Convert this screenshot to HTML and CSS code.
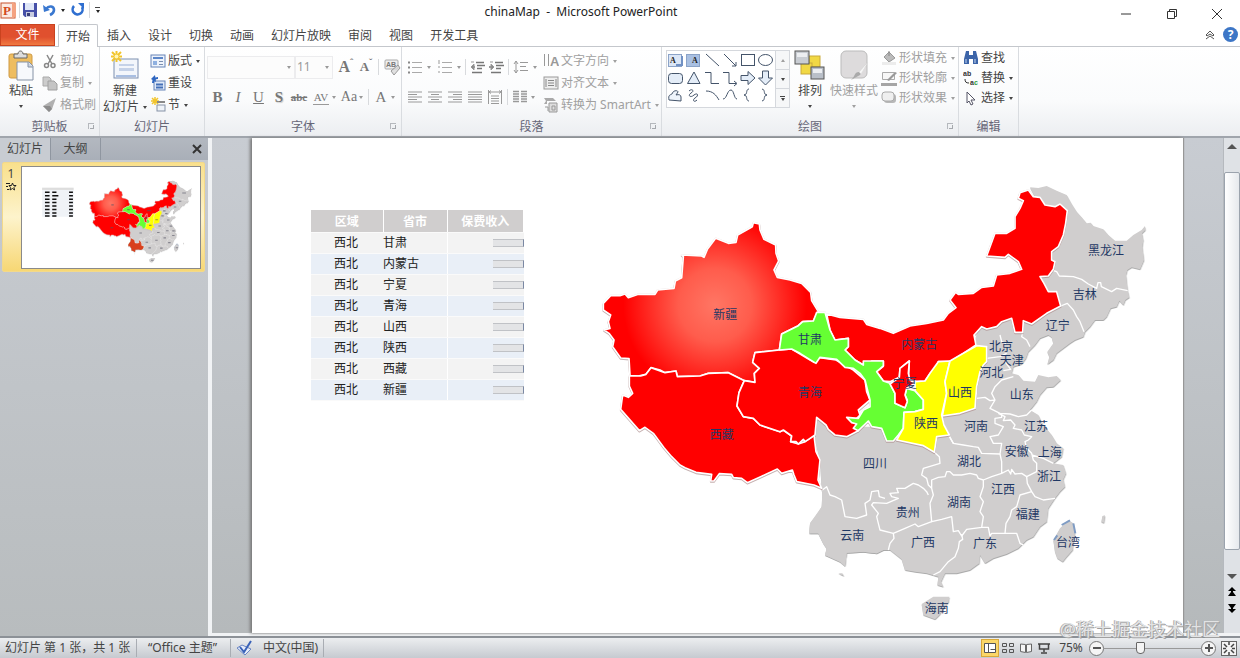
FILE: index.html
```html
<!DOCTYPE html>
<html lang="zh-CN">
<head>
<meta charset="utf-8">
<meta name="viewport" content="width=device-width, initial-scale=1">
<title>chinaMap - Microsoft PowerPoint</title>
<link rel="stylesheet" href="styles.css">
</head>
<body>
<div class="app">
  <header class="titlebar">
    <div class="quick">
      <svg width="17" height="18" viewBox="0 0 17 18"><rect x="1" y="2" width="14" height="15" fill="#fbeae2" stroke="#c8522c"/><path d="M12 1l4 2v13l-4 1z" fill="#f4a382"/><text x="3" y="14" class="logo-letter">P</text></svg>
      <i class="divider"></i>
      <button class="plain" aria-label="保存"><svg width="16" height="16" viewBox="0 0 16 16"><path d="M1 1h14v14H3l-2-2z" fill="#4650a8"/><path d="M3 1h9v7H3z" fill="#dfe6f7"/><path d="M4 10h8v5H4z" fill="#c9cde0"/><path d="M5 11h3v3H5z" fill="#3b4078"/></svg></button>
      <button class="plain undo" aria-label="撤消"><svg width="14" height="14" viewBox="0 0 14 14"><path d="M3 6C6 2 11 3 11 7c0 3-2 4-4 5" fill="none" stroke="#3a78d0" stroke-width="2.600"/><path d="M0 2l1 7 6-2z" fill="#3a78d0"/></svg><i class="caret"></i></button>
      <button class="plain redo" aria-label="重复"><svg width="14" height="14" viewBox="0 0 14 14"><path d="M3 3a5 5 0 1 0 8 1" fill="none" stroke="#2f6fd0" stroke-width="2.600"/><path d="M7 0h6v6z" fill="#2f6fd0"/></svg></button>
      <i class="divider"></i>
      <button class="plain more" aria-label="自定义快速访问工具栏"><i class="bar"></i><i class="caret"></i></button>
    </div>
    <h1 class="title">chinaMap&nbsp; -&nbsp; Microsoft PowerPoint</h1>
    <div class="window-buttons">
      <button class="plain" aria-label="最小化"><svg width="12" height="12" viewBox="0 0 12 12"><path d="M1 6h10" stroke="#333"/></svg></button>
      <button class="plain" aria-label="还原"><svg width="12" height="12" viewBox="0 0 12 12"><path d="M1.500 3.500h7v7h-7zM3.500 3.500v-2h7v7h-2" fill="none" stroke="#333"/></svg></button>
      <button class="plain" aria-label="关闭"><svg width="12" height="12" viewBox="0 0 12 12"><path d="M1 1l10 10M11 1L1 11" stroke="#333"/></svg></button>
    </div>
  </header>

  <nav class="tabs">
    <button class="file">文件</button>
    <button class="tab current">开始</button>
    <button class="tab">插入</button>
    <button class="tab">设计</button>
    <button class="tab">切换</button>
    <button class="tab">动画</button>
    <button class="tab">幻灯片放映</button>
    <button class="tab">审阅</button>
    <button class="tab">视图</button>
    <button class="tab">开发工具</button>
    <span class="spacer"></span>
    <button class="plain" aria-label="折叠功能区"><svg width="10" height="10" viewBox="0 0 10 10"><path d="M1 5l4-4 4 4-1 1-3-2-3 2zM1 9l4-3 4 3" fill="none" stroke="#555"/></svg></button>
    <button class="help" aria-label="帮助">?</button>
  </nav>

  <div class="ribbon">
    <section class="group clipboard">
      <div class="body">
        <button class="big">
          <svg width="28" height="31" viewBox="0 0 28 31"><rect x="2" y="4" width="23" height="24" rx="2" fill="#eebd60" stroke="#cf9a45"/><path d="M7 8V4h4c0-4 5-4 5 0h4v4z" fill="#ddd" stroke="#666"/><path d="M10 12h12l4 4v14H10z" fill="#f7f9fc" stroke="#8592a6"/><path d="M21 12v5h5" fill="#cdd5e0" stroke="#8592a6"/></svg>
          <span>粘贴</span><i class="caret"></i>
        </button>
        <div class="stack">
          <button class="small" disabled><svg width="16" height="16" viewBox="0 0 16 16"><path d="M5 2l5 9M11 2L6 11" stroke="#888" stroke-width="1.500"/><circle cx="4.500" cy="12.500" r="2" fill="none" stroke="#888" stroke-width="1.500"/><circle cx="11" cy="12.500" r="2" fill="none" stroke="#888" stroke-width="1.500"/></svg>剪切</button>
          <button class="small" disabled><svg width="16" height="16" viewBox="0 0 16 16"><path d="M1 2h6l2 2v7H1z" fill="#ccc" stroke="#aaa"/><path d="M6 6h6l3 3v6H6z" fill="#c4c4c4" stroke="#a0a0a0"/></svg>复制<i class="caret"></i></button>
          <button class="small" disabled><svg width="16" height="16" viewBox="0 0 16 16"><path d="M14 1l-4 11-3 3-6-6z" fill="#b0b0b0"/><path d="M1 9h7l2 3-3 3z" fill="#8c8c8c"/></svg>格式刷</button>
        </div>
      </div>
      <h2>剪贴板<i class="launcher"></i></h2>
    </section>

    <section class="group slides">
      <div class="body">
        <button class="big">
          <svg width="30" height="31" viewBox="0 0 30 31"><rect x="4" y="9" width="24" height="19" fill="#f3f6fb" stroke="#7d8fb0"/><path d="M6 25h20v2H6z" fill="#a9bfe2"/><path d="M9 14h15v2H9zM9 18h15v3H9z" fill="#c5d2e8"/><path d="M6.500 1v11M1 6.500h11M2 2l9 9M11 2l-9 9" stroke="#f2c52c" stroke-width="2"/><circle cx="6.500" cy="6.500" r="2" fill="#fff6b8"/></svg>
          <span>新建</span><span>幻灯片<i class="caret"></i></span>
        </button>
        <div class="stack">
          <button class="small"><svg width="16" height="14" viewBox="0 0 16 14"><rect x="1" y="1" width="14" height="12" fill="#eef3fb" stroke="#6684b8"/><path d="M3 3h10v2H3z" fill="#5c86c8"/><path d="M3 7h4v4H3z" fill="#8fb0e0"/><path d="M9 7.500h4M9 10.500h4" stroke="#7a8eb0"/></svg>版式<i class="caret"></i></button>
          <button class="small"><svg width="16" height="16" viewBox="0 0 16 16"><rect x="4" y="6" width="11" height="9" fill="#dfe9f8" stroke="#6684b8"/><path d="M6 9.500h7M6 12.500h7" stroke="#4470b8" stroke-width="2"/><path d="M3 8c0-4 2-5 5-5" fill="none" stroke="#2f66c0" stroke-width="2"/><path d="M5 0L1 4l5 3z" fill="#2f66c0"/></svg>重设</button>
          <button class="small"><svg width="16" height="16" viewBox="0 0 16 16"><path d="M5 0v8M1 4h8M2 1l6 6M8 1L2 7" stroke="#f2c52c" stroke-width="1.500"/><path d="M7 5h8" stroke="#888" stroke-width="2"/><rect x="7" y="8" width="8" height="6" fill="#eef2f8" stroke="#8592a6"/></svg>节<i class="caret"></i></button>
        </div>
      </div>
      <h2>幻灯片</h2>
    </section>

    <section class="group font">
      <div class="body rows">
        <div class="row upper">
          <label class="combo family"><select aria-label="字体"><option></option></select><i class="caret"></i></label>
          <label class="combo size"><select aria-label="字号"><option>11</option></select><i class="caret"></i></label>
          <button class="glyph serif grow" aria-label="增大字号">A<sup>ˆ</sup></button>
          <button class="glyph serif shrink" aria-label="减小字号">A<sup>ˇ</sup></button>
          <i class="divider"></i>
          <button class="glyph" aria-label="清除格式"><svg width="17" height="17" viewBox="0 0 17 17"><rect x="1" y="1" width="13" height="9" rx="1" fill="#eee" stroke="#aaa"/><text x="2" y="8" class="mini grey">AB</text><path d="M7 12l7-6 2 3-6 7z" fill="#d8d8d8" fill-opacity=".8" stroke="#999"/></svg></button>
        </div>
        <div class="row lower">
          <button class="glyph serif bold">B</button>
          <button class="glyph serif italic">I</button>
          <button class="glyph serif under">U</button>
          <button class="glyph serif shade">S</button>
          <button class="glyph serif strike">abc</button>
          <button class="glyph serif spaced">AV</button><i class="caret"></i>
          <button class="glyph serif case">Aa</button><i class="caret"></i>
          <i class="divider"></i>
          <button class="glyph serif colour">A</button><i class="caret"></i>
        </div>
      </div>
      <h2>字体<i class="launcher"></i></h2>
    </section>

    <section class="group paragraph">
      <div class="body">
        <div class="rows">
          <div class="row upper">
            <button class="glyph" aria-label="项目符号"><svg width="16" height="14" viewBox="0 0 16 14"><path d="M5 2.500h10M5 7.500h10M5 12.500h10" stroke="#aaa"/><path d="M1 2.500h2M1 7.500h2M1 12.500h2" stroke="#888" stroke-width="2"/></svg></button><i class="caret"></i>
            <button class="glyph" aria-label="编号"><svg width="16" height="14" viewBox="0 0 16 14"><path d="M5 2.500h10M5 7.500h10M5 12.500h10" stroke="#aaa"/><path d="M2 0v4M1 7h2M1 12h2" stroke="#999"/></svg></button><i class="caret"></i>
            <i class="divider"></i>
            <button class="glyph" aria-label="降低列表级别"><svg width="16" height="14" viewBox="0 0 16 14"><path d="M1 7h4M6 2.500h8M7 5.500h8M7 8.500h5M2 12.500h10" stroke="#777" stroke-width="1.500"/><path d="M4 4v6L1 7zM1 2h3" fill="#888" stroke="#999"/></svg></button>
            <button class="glyph" aria-label="提高列表级别"><svg width="16" height="14" viewBox="0 0 16 14"><path d="M0 7h4M6 2.500h8M7 5.500h8M7 8.500h5M2 12.500h10" stroke="#777" stroke-width="1.500"/><path d="M2 4v6l3-3zM1 2h3" fill="#888" stroke="#999"/></svg></button>
            <i class="divider"></i>
            <button class="glyph" aria-label="行距"><svg width="16" height="14" viewBox="0 0 16 14"><path d="M7 2.500h8M7 6.500h6M7 10.500h8M3 1v12M1 4l2-3 2 3M1 10l2 3 2-3" fill="none" stroke="#999"/></svg></button><i class="caret"></i>
          </div>
          <div class="row lower">
            <button class="glyph" aria-label="左对齐"><svg width="14" height="14" viewBox="0 0 14 14"><path d="M0 2h14M0 4.500h9M0 7h14M0 9.500h9M0 12h14" stroke="#999" stroke-width="1.200"/></svg></button>
            <button class="glyph" aria-label="居中"><svg width="14" height="14" viewBox="0 0 14 14"><path d="M0 2h14M3 4.500h8M0 7h14M3 9.500h8M0 12h14" stroke="#999" stroke-width="1.200"/></svg></button>
            <button class="glyph" aria-label="右对齐"><svg width="14" height="14" viewBox="0 0 14 14"><path d="M0 2h14M5 4.500h9M0 7h14M5 9.500h9M0 12h14" stroke="#999" stroke-width="1.200"/></svg></button>
            <button class="glyph" aria-label="两端对齐"><svg width="14" height="14" viewBox="0 0 14 14"><path d="M0 2h14M0 4.500h14M0 7h14M0 9.500h14M0 12h14" stroke="#999" stroke-width="1.200"/></svg></button>
            <button class="glyph" aria-label="分散对齐"><svg width="14" height="14" viewBox="0 0 14 14"><path d="M.5 0v14M13.500 0v14M1 2h12M3 .5L1 2l2 1.500M11 .5L13 2l-2 1.500M3 6h8M3 8.500h8M3 11h8M3 13.500h8" fill="none" stroke="#999"/></svg></button>
            <i class="divider"></i>
            <button class="glyph" aria-label="分栏"><svg width="14" height="14" viewBox="0 0 14 14"><path d="M0 1.500h6M0 4h6M0 6.500h6M0 9h6M0 11.500h6M8 1.500h6M8 4h6M8 6.500h6M8 9h6M8 11.500h6" stroke="#999" stroke-width="1.300"/></svg></button><i class="caret"></i>
          </div>
        </div>
        <div class="stack">
          <button class="small" disabled><svg width="16" height="16" viewBox="0 0 16 16"><path d="M1.500 1v12M5.500 1v12" stroke="#999"/><text x="7" y="13" class="direction">A</text></svg>文字方向<i class="caret"></i></button>
          <button class="small" disabled><svg width="16" height="16" viewBox="0 0 16 16"><rect x="1" y="2" width="14" height="12" fill="#eee" stroke="#999"/><path d="M5 5.500h6M5 8h6M5 10.500h6M3 4v8M13 4v8" stroke="#888"/></svg>对齐文本<i class="caret"></i></button>
          <button class="small" disabled><svg width="16" height="16" viewBox="0 0 16 16"><path d="M1 1h9l3 3H4v3H1l2-3z" fill="#aaa"/><path d="M6 6h8v9H6z" fill="#ddd" stroke="#999"/><path d="M2 10h3v4M9 9h3v4H9z" fill="none" stroke="#999"/></svg>转换为 SmartArt<i class="caret"></i></button>
        </div>
      </div>
      <h2>段落<i class="launcher"></i></h2>
    </section>

    <section class="group drawing">
      <div class="body">
        <div class="gallery">
          <svg class="shapes" viewBox="0 0 108 54" width="108" height="54" fill="none" stroke="#44546a">
            <rect x="1.500" y="3.500" width="13" height="12" fill="#dbe6f6" stroke="#8ba3c8"/><path d="M9 14h6V5" stroke="#7191c4" stroke-width="2"/><text x="3" y="12" class="box-letter">A</text>
            <rect x="19.500" y="3.500" width="13" height="12" fill="#a9c0e2" stroke="#8ba3c8"/><text x="25" y="12" class="box-letter">A</text>
            <path d="M39 3l13 12M57 3l12 12M69 11v4h-4"/><rect x="74.500" y="3.500" width="13" height="11"/><ellipse cx="98.500" cy="9" rx="7" ry="5.500"/>
            <rect x="1.500" y="22.500" width="14" height="10" rx="3" fill="#e4edf8"/><path d="M27 21l6 11.500H20.500z" fill="#e4edf8"/><path d="M38 21.500h6v11h8M56 21.500h6v11h7M67 30l3 2.500-3 2.500"/><path d="M74 24.500h7v-4l7 6.500-7 6.500v-4h-7z" fill="#e4edf8"/><path d="M95.500 20v7h-4l7 7 7-7h-4v-7z" fill="#e4edf8"/>
            <path d="M2 49c-1-5 1-5 3-6 1-4 6-4 6-2l-2 3c3-1 5 0 5 2v4z" fill="#eef4fb"/><path d="M22 40c3-3 6 0 2 2-4 3 0 5 3 2 4-3 5 1 1 3-3 2-1 5 2 2M39 40c7 0 10 4 13 9M56 48c4 0 4-9 8-9 3 0 3 9 6 9M82 38c-3 0-2 5-3 5l-2 1 2 1c1 0 0 5 3 5M95 38c3 0 2 5 3 5l2 1-2 1c-1 0 0 5-3 5"/>
          </svg>
          <div class="gallery-scroll">
            <button aria-label="上一行" disabled><i class="caret up"></i></button>
            <button aria-label="下一行"><i class="caret"></i></button>
            <button aria-label="其他"><i class="bar"></i><i class="caret"></i></button>
          </div>
        </div>
        <button class="big arrange">
          <svg width="32" height="31" viewBox="0 0 32 31"><rect x="15" y="6" width="11" height="11" fill="#f1d844" stroke="#c9a93a"/><rect x="7" y="13" width="11" height="11" fill="#f1d844" stroke="#c9a93a"/><rect x="1" y="1" width="14" height="13" fill="#c9cdd3" stroke="#555"/><rect x="17" y="17" width="13" height="12" fill="#b9bfc8" stroke="#555"/><path d="M3 3h10v4H3zM19 19h9v4h-9z" fill="#eceef1"/></svg>
          <span>排列</span><i class="caret"></i>
        </button>
        <button class="big styles" disabled>
          <svg width="30" height="31" viewBox="0 0 30 31"><rect x="2" y="1" width="26" height="27" rx="5" fill="#dddbdc" stroke="#bbb"/><path d="M29 12l-8 13-9 5c4-3 3-8 8-8z" fill="#aaa"/><path d="M29 12l-9 10 2 2z" fill="#f5f5f5"/></svg>
          <span>快速样式</span><i class="caret"></i>
        </button>
        <div class="stack tight">
          <button class="small" disabled><svg width="16" height="16" viewBox="0 0 16 16"><path d="M8 2l6 6-6 4-5-5z" fill="#bbb" stroke="#999"/><path d="M8 1v5" stroke="#888"/><path d="M1 12h14v3H1z" fill="#ececec"/></svg>形状填充<i class="caret"></i></button>
          <button class="small" disabled><svg width="16" height="16" viewBox="0 0 16 16"><path d="M1.500 2.500h12v7h-12z" fill="#f7f7f7" stroke="#aaa"/><path d="M6 10l8-8 2 1-8 8z" fill="#999"/><path d="M0 13h16v3H0z" fill="#a5a5a5"/></svg>形状轮廓<i class="caret"></i></button>
          <button class="small" disabled><svg width="16" height="16" viewBox="0 0 16 16"><rect x="3" y="4" width="12" height="9" rx="3" fill="#b8b8b8"/><rect x="1" y="2" width="12" height="9" rx="3" fill="#efefef" stroke="#aaa"/></svg>形状效果<i class="caret"></i></button>
        </div>
      </div>
      <h2>绘图<i class="launcher"></i></h2>
    </section>

    <section class="group editing">
      <div class="body">
        <div class="stack tight">
          <button class="small"><svg width="16" height="16" viewBox="0 0 16 16"><path d="M3 1h3v4h4V1h3l2 8v5h-5V9H6v5H1V9z" fill="#3c64a8"/><path d="M3 9v4M12 9v4" stroke="#c5d6f0"/></svg>查找</button>
          <button class="small"><svg width="16" height="18" viewBox="0 0 16 18"><text x="0" y="7" class="mini">ab</text><text x="7" y="16" class="mini">a<tspan class="replaced">c</tspan></text><path d="M2 10c0 3 1 4 4 4" fill="none" stroke="#333"/></svg>替换<i class="caret"></i></button>
          <button class="small"><svg width="16" height="16" viewBox="0 0 16 16"><path d="M4 2l8 8H8l2 4-2 1-2-4-2 2z" fill="#fff" stroke="#556"/></svg>选择<i class="caret"></i></button>
        </div>
      </div>
      <h2>编辑</h2>
    </section>
  </div>

  <main class="workspace">
    <aside class="pane">
      <div class="pane-tabs">
        <button class="current">幻灯片</button>
        <button>大纲</button>
        <button class="close" aria-label="关闭窗格"><svg width="10" height="10" viewBox="0 0 10 10"><path d="M1 1l8 8M9 1L1 9" stroke="#333" stroke-width="2"/></svg></button>
      </div>
      <button class="thumb" aria-label="幻灯片 1">
        <span class="thumb-no">1<svg width="11" height="9" viewBox="0 0 11 9"><path d="M6.500 1l1 2.500H10L8 5.500 8.500 8l-2-1.500L4 8l.5-2.500L3 3.500h2.500zM0 1.500h4M0 4.500h2M1 7.500h2" fill="none" stroke="#222"/></svg></span>
        <svg class="thumb-slide" viewBox="0 0 930 527">
          <path d="M105 120h165v-12H105z" fill="#ddd"/><path d="M105 120h165v140H105z" fill="#f0f3f7"/>
          <path d="M120 132h24M158 132h22M246 132h20M120 150h24M158 150h32M246 150h20M120 168h24M158 168h22M246 168h20M120 186h24M158 186h22M246 186h20M120 204h24M158 204h22M246 204h20M120 222h24M158 222h22M246 222h20M120 240h24M158 240h22M246 240h20M120 256h24M158 256h22M246 256h20" stroke="#111" stroke-width="8"/>
          <svg x="340" y="66" width="560" height="440" viewBox="0 0 1710 1341">
            <use href="#china"/>
            <path d="M386 402h40M640 477h40M640 636h40M375 764h40M958 493h60M924 609h40M988 729h40M1090 638h40M1518 212h60M1464 343h40M1383 436h40M1213 498h40M1245 541h40M1184 577h40M1275 642h40M1138 738h40M1318 740h40M1260 814h40M1359 817h40M1357 890h40M1117 843h40M1219 929h40M1087 966h40M1293 1004h40M933 998h40M835 850h40M979 1088h40M1165 1091h40M1414 1086h40M1020 1285h40" stroke="#556" stroke-opacity=".6" stroke-width="18"/>
          </svg>
        </svg>
      </button>
    </aside>

    <div class="stage">
      <article class="slide">
        <table class="data">
          <thead><tr><th>区域</th><th>省市</th><th>保费收入</th></tr></thead>
          <tbody>
            <tr><td>西北</td><td>甘肃</td><td><i class="masked"></i></td></tr>
            <tr><td>西北</td><td>内蒙古</td><td><i class="masked"></i></td></tr>
            <tr><td>西北</td><td>宁夏</td><td><i class="masked"></i></td></tr>
            <tr><td>西北</td><td>青海</td><td><i class="masked"></i></td></tr>
            <tr><td>西北</td><td>山西</td><td><i class="masked"></i></td></tr>
            <tr><td>西北</td><td>陕西</td><td><i class="masked"></i></td></tr>
            <tr><td>西北</td><td>西藏</td><td><i class="masked"></i></td></tr>
            <tr><td>西北</td><td>新疆</td><td><i class="masked"></i></td></tr>
          </tbody>
        </table>
        <svg class="map" viewBox="0 0 1710 1341" role="img" aria-label="中国地图">
          <defs>
            <radialGradient id="glow" gradientUnits="userSpaceOnUse" cx="375" cy="375" r="275"><stop offset="0" stop-color="#ff7664"/><stop offset=".4" stop-color="#ff5c4c"/><stop offset="1" stop-color="#ff0000"/></radialGradient>
            <g id="china">
              <g class="land">
                <path d="M1320 22L1345 24 1370 18 1400 32 1430 45 1445 72 1460 95 1475 112 1490 130 1502 128 1510 138 1540 148 1555 165 1575 182 1610 182 1630 165 1655 150 1665 138 1666 150 1656 160 1660 180 1657 200 1662 240 1650 268 1625 262 1612 270 1608 285 1613 330 1618 352 1606 360 1600 375 1588 362 1580 380 1562 385 1550 410 1540 420 1515 420 1500 440 1485 455 1480 470 1455 480 1440 490 1400 520 1390 540 1372 553 1378 530 1372 515 1390 490 1385 472 1375 465 1350 475 1335 495 1315 515 1308 535 1295 552 1270 560 1265 580 1285 585 1300 602 1335 605 1345 585 1375 592 1400 588 1412 600 1390 620 1370 622 1350 645 1340 665 1320 690 1345 705 1360 735 1385 765 1400 790 1420 805 1415 830 1390 850 1420 855 1428 880 1420 898 1425 920 1410 935 1395 955 1375 985 1370 1025 1350 1040 1330 1070 1310 1080 1285 1105 1250 1122 1210 1135 1185 1150 1170 1125 1168 1150 1140 1170 1100 1180 1065 1180 1053 1205 1060 1220 1042 1215 1045 1190 1010 1180 975 1175 945 1170 935 1138 900 1110 880 1110 860 1120 820 1115 770 1118 765 1158 750 1145 705 1125 710 1105 700 1090 685 1060 658 1060 660 1030 680 1005 695 980 700 950 695 930 690 840 675 780 680 712 780 740 900 740 1000 760 1060 700 1120 680 1150 560 1160 460 1180 430 1270 420 1300 420 1400 370 1340 290 1380 200 1400 90 1340 60Z"/>
                <path class="yunnan" d="M697 935L720 940 735 950 755 960 765 1010 800 1015 830 1005 825 970 845 975 865 1010 870 1050 908 1066 890 1105 860 1120 820 1115 770 1118 765 1158 750 1145 705 1125 710 1105 700 1090 685 1060 658 1060 660 1030 695 980Z"/>
                <path d="M1435 1020L1450 1030 1455 1060 1448 1110 1430 1130 1418 1145 1402 1135 1395 1115 1390 1080 1410 1045Z"/>
                <path d="M1537 1008L1545 1006 1542 1028 1534 1026ZM745 1180L762 1188 757 1180Z"/>
                <path d="M995 1272L1030 1250 1078 1250 1076 1265 1065 1280 1048 1305 1035 1318 1000 1305Z"/>
              </g>
              <path d="M1415 1035L1440 1021M1392 1080L1402 1066M1450 1030L1456 1060" fill="none" stroke="#7f9cc4" stroke-width="6"/>
              <g class="borders">
                <path d="M1385 270L1400 275 1408 288 1450 290 1475 298 1495 312 1520 325 1524 308 1532 308 1534 320 1565 335 1580 325 1613 332"/>
                <path d="M1412 378L1432 370 1450 390 1460 410 1470 425 1482 455M1298 457L1295 470 1310 480 1320 500"/>
                <path d="M1190 535L1230 530 1250 520M1245 545L1262 568 1240 572M1230 465L1235 485 1248 490"/>
                <path d="M1270 590L1235 600 1215 620 1205 640 1215 660 1200 685 1230 700 1260 702 1285 710 1310 705 1325 690M1160 655L1185 652 1200 662 1215 660"/>
                <path d="M1235 702L1235 712 1215 715 1215 730 1240 740 1225 765 1200 770 1210 790 1235 790 1230 822 1175 820 1165 802 1150 800 1120 795 1090 790 1075 765 1062 755"/>
                <path d="M1225 700L1245 710 1240 722 1262 720 1275 735 1270 745 1295 750 1303 765 1325 770 1315 780 1305 785 1310 805 1325 820 1330 840 1340 850 1340 875 1310 890 1295 880 1275 882 1265 868 1262 882 1255 870 1235 880 1235 845 1230 822M1325 825L1360 835 1390 850"/>
                <path d="M1235 880L1205 890 1180 900 1165 895 1160 885 1140 880 1115 885 1090 885 1080 875 1070 875 1065 890 1045 892 1025 900 1025 925 1030 945 1020 970 1025 1025 1055 1018 1085 1010 1090 1055 1105 1052 1115 1068 1130 1048 1175 1042 1180 1010 1170 995 1180 965 1170 950 1180 920 1180 900"/>
                <path d="M1310 890L1312 910 1325 935 1290 945 1280 980 1265 990 1260 1010 1248 1030 1245 1060 1205 1060 1200 1068 1195 1042 1175 1042M1325 935L1335 950 1360 960 1395 955M1245 1060L1280 1060 1290 1090 1300 1095"/>
                <path d="M1115 1062L1118 1078 1108 1085 1105 1105 1095 1130 1075 1145 1050 1175 1030 1185M1025 1025L985 1040 975 1032 945 1045 910 1060 912 1075 900 1090 895 1110"/>
                <path d="M910 1060L870 1050 865 1030 860 1010 865 1000 845 975 850 968 890 970 925 955 905 950 900 940 925 938 920 925 945 925 970 910 985 915 1000 925 1010 935 1015 945"/>
                <path d="M697 930L710 920 720 945 735 950 755 960 765 1010 800 1015 830 1005 825 970 840 960 845 935 865 932 868 950 885 955M1033 817L1048 830 1050 850 1000 865 995 885 1010 895 1015 915 1025 925M1078 768L1090 790"/>
              </g>
              <g class="sales">
                <path class="red" d="M710 402L750 412 820 418 830 433 870 445 910 460 960 438 1010 430 1060 420 1075 400 1098 383 1080 360 1097 337 1105 343 1150 340 1175 322 1210 318 1220 285 1260 280 1295 268 1285 245 1255 223 1245 232 1190 228 1215 160 1250 160 1275 145 1275 110 1290 85 1300 62 1285 55 1290 38 1315 30 1330 50 1350 52 1365 75 1395 80 1410 72 1432 92 1427 130 1420 165 1405 200 1385 215 1385 240 1395 245 1390 268 1375 288 1350 290 1362 310 1375 335 1400 335 1412 378 1370 400 1325 432 1300 422 1298 457 1275 457 1265 415 1235 425 1220 440 1190 447 1175 440 1152 465 1158 495 1120 520 1080 545 1045 545 1035 570 1020 580 1005 603 980 605 955 598 958 543 930 565 928 592 900 605 880 603 860 575 880 558 880 543 845 543 845 555 820 555 795 540 765 510 775 500 775 475 735 480 720 450Z"/>
                <path class="xinjiang" d="M40 370L62 347 90 347 105 342 115 353 145 343 195 343 203 330 252 325 256 303 275 293 280 230 275 225 335 228 342 232 352 208 377 175 415 190 438 187 443 165 487 140 490 128 508 132 510 150 522 178 557 195 558 220 566 243 552 270 562 292 600 300 635 310 662 337 665 362 685 395 670 423 638 425 625 437 575 462 568 510 495 518 488 547 508 565 493 580 495 607 463 602 415 578 355 580 330 588 262 590 258 573 225 578 210 570 183 563 168 583 145 588 120 587 117 536 92 534 68 500 72 480 57 460 42 450 60 445 55 425 62 405 40 390Z"/>
                <path class="red" d="M118 588L152 588 168 583 183 563 225 578 258 573 262 590 330 588 355 580 415 578 463 602 447 638 441 678 460 710 490 715 510 735 570 755 580 750 605 768 602 785 625 792 645 785 660 775 672 765 678 815 690 840 684 900 695 925 672 915 620 905 612 885 607 870 575 880 562 867 512 890 472 908 455 895 430 893 425 883 388 881 372 903 362 903 365 883 318 877 285 863 270 855 245 830 222 803 190 760 165 742 148 752 92 688 98 645 115 652 128 640 118 618Z"/>
                <path class="red" d="M495 518L568 510 605 507 672 547 685 532 738 540 790 570 825 600 830 635 840 660 805 690 810 705 795 720 805 752 770 770 735 765 715 748 708 735 680 712 675 765 660 775 645 785 640 778 625 792 618 785 602 785 605 768 580 750 570 755 510 735 490 715 460 710 441 678 447 638 463 602 495 607 493 580 508 565 488 547Z"/>
                <path class="green" d="M680 397L705 397 720 450 735 480 775 475 775 500 765 510 795 540 820 555 820 543 880 543 880 558 860 575 880 603 900 610 915 640 915 670 945 683 952 660 945 645 950 625 975 632 1000 660 1000 688 975 695 942 697 940 745 925 765 910 783 890 783 875 745 845 740 835 723 805 752 790 745 800 732 785 728 770 712 805 715 820 690 840 680 840 660 825 600 810 580 790 565 765 562 740 538 690 532 678 550 630 520 605 507 568 510 575 462 625 437 638 425 670 423Z"/>
                <path class="red" d="M958 543L955 580 960 600 975 610 950 625 945 645 952 665 945 683 915 670 915 640 900 612 928 592 930 565Z"/>
                <path class="yellow" d="M1080 543L1065 605 1070 640 1055 705 1062 735 1078 765 1040 770 1033 817 1000 797 920 780 940 745 942 697 975 695 1000 688 1000 660 975 632 975 605 1005 603 1020 580 1045 545Z"/>
                <path class="yellow" d="M1190 500L1160 497 1120 520 1080 543 1065 605 1070 640 1057 708 1110 700 1155 685 1160 620 1170 575 1180 555 1190 545Z"/>
              </g>
            </g>
          </defs>
          <use href="#china"/>
          <g class="labels">
            <text x="406" y="402">新疆</text><text x="660" y="477">甘肃</text><text x="660" y="636">青海</text><text x="395" y="764">西藏</text><text x="988" y="493">内蒙古</text><text x="944" y="609">宁夏</text><text x="1008" y="729">陕西</text><text x="1110" y="638">山西</text><text x="1548" y="212">黑龙江</text><text x="1484" y="343">吉林</text><text x="1403" y="436">辽宁</text><text x="1233" y="498">北京</text><text x="1265" y="541">天津</text><text x="1204" y="577">河北</text><text x="1295" y="642">山东</text><text x="1158" y="738">河南</text><text x="1338" y="740">江苏</text><text x="1280" y="814">安徽</text><text x="1379" y="817">上海</text><text x="1377" y="890">浙江</text><text x="1137" y="843">湖北</text><text x="1239" y="929">江西</text><text x="1107" y="966">湖南</text><text x="1313" y="1004">福建</text><text x="953" y="998">贵州</text><text x="855" y="850">四川</text><text x="787" y="1065">云南</text><text x="999" y="1088">广西</text><text x="1185" y="1091">广东</text><text x="1434" y="1086">台湾</text><text x="1040" y="1285">海南</text>
          </g>
        </svg>
      </article>
      <div class="scrollbar">
        <button aria-label="向上滚动"><i class="arrow up"></i></button>
        <div class="track"><div class="handle"></div></div>
        <button aria-label="向下滚动"><i class="arrow"></i></button>
        <button aria-label="上一张幻灯片"><svg width="8" height="10" viewBox="0 0 8 10"><path d="M4 0l4 4H5v1l3 4H0l3-4V4H0z"/></svg></button>
        <button aria-label="下一张幻灯片"><svg width="8" height="10" viewBox="0 0 8 10"><path d="M4 10L0 6h3V5L0 1h8L5 5v1h3z"/></svg></button>
      </div>
    </div>
    <div class="watermark">@稀土掘金技术社区</div>
  </main>

  <footer class="status">
    <span class="cell pages">幻灯片 第 1 张，共 1 张</span>
    <span class="cell theme">“Office 主题”</span>
    <span class="cell lang"><svg width="16" height="16" viewBox="0 0 16 16"><path d="M1 8l5-3 9 4-6 6z" fill="#e8eefa" stroke="#6a86c4"/><path d="M4 7l4 5 7-11" fill="none" stroke="#3a62b8" stroke-width="2"/></svg>中文(中国)</span>
    <span class="spacer"></span>
    <button class="view on" aria-label="普通视图"><svg width="12" height="10" viewBox="0 0 12 10"><path d="M.5.5h11v9H.5zM4.500.5v9M6.500 6.500h5" fill="#fff" stroke="#555"/></svg></button>
    <button class="view" aria-label="幻灯片浏览"><svg width="12" height="10" viewBox="0 0 12 10"><path d="M.5.5h4v3h-4zM7.500.5h4v3h-4zM.5 6.500h4v3h-4zM7.500 6.500h4v3h-4z" fill="none" stroke="#555"/></svg></button>
    <button class="view" aria-label="阅读视图"><svg width="12" height="10" viewBox="0 0 12 10"><path d="M.5 1l5 .5v8l-5-1zM11.500 1l-5 .5v8l5-1z" fill="#f4f4f4" stroke="#666"/></svg></button>
    <button class="view" aria-label="幻灯片放映"><svg width="12" height="11" viewBox="0 0 12 11"><path d="M0 1h12M1.500 1v5h9V1M6 6v3M3 10h6" fill="none" stroke="#444" stroke-width="1.500"/></svg></button>
    <span class="percent">75%</span>
    <button class="round" aria-label="缩小"><svg width="8" height="8" viewBox="0 0 8 8"><path d="M0 4h8" stroke="#555" stroke-width="2"/></svg></button>
    <input class="zoom" type="range" min="0" max="100" value="36" aria-label="显示比例">
    <button class="round" aria-label="放大"><svg width="8" height="8" viewBox="0 0 8 8"><path d="M0 4h8M4 0v8" stroke="#555" stroke-width="2"/></svg></button>
    <button class="fit" aria-label="适应窗口"><svg width="16" height="15" viewBox="0 0 16 15"><rect x=".5" y=".5" width="15" height="14" fill="#f3f3f3" stroke="#666"/><path d="M8 1v3M8 11v3M2 7.500h3M11 7.500h3M3 3l3 3M13 3l-3 3M3 12l3-3M13 12l-3-3" stroke="#444" stroke-width="1.500"/></svg></button>
  </footer>
</div>
</body>
</html>
```
FILE: styles.css
```css
* { box-sizing: border-box; }

body {
  margin: 0;
  font: 12px/16px "Noto Sans", "Noto Sans CJK SC", sans-serif;
  color: #444;
  background: #fff;
}

button, select, input { font: inherit; color: inherit; }

button {
  display: flex;
  align-items: center;
  justify-content: center;
  flex: none;
  padding: 0;
  border: 0;
  background: none;
  white-space: nowrap;
}

svg { flex: none; }

h1, h2 { margin: 0; font-size: 12px; font-weight: 400; }

.app { display: flex; flex-direction: column; height: 100vh; overflow: hidden; }
.spacer { flex: 1; }

.caret {
  flex: none;
  width: 0;
  height: 0;
  border: 2px solid transparent;
  border-top: 3px solid currentColor;
  border-bottom: 0;
}
.caret.up { border-top: 0; border-bottom: 3px solid currentColor; }
.divider { flex: none; width: 1px; height: 16px; background: #d8dadd; }

/* Lettering inside icons */
.logo-letter { font: 700 13px "Liberation Serif", serif; fill: #d24a1e; }
.mini { font: 700 7px "Liberation Sans", sans-serif; fill: #333; }
.mini.grey { fill: #777; }
.replaced { fill: #2e9a3c; }
.direction { font: 700 13px "Liberation Sans", sans-serif; fill: #999; }
.box-letter { font: 700 8px "Liberation Serif", serif; fill: #222; stroke: none; }

/* Title bar */
.titlebar { display: flex; height: 24px; flex: none; }
.quick { display: flex; align-items: center; width: 104px; height: 20px; gap: 2px; color: #222; }
.plain + .undo { margin-left: 3px; }
.undo { gap: 4px; }
.redo { margin-left: 4px; }
.redo + .divider { margin-left: 2px; }
.more { flex-direction: column; gap: 2px; margin-left: 3px; }
.bar { width: 5px; height: 1px; background: #444; }
.title { flex: 1; text-align: center; line-height: 24px; color: #222; }
.window-buttons { display: flex; width: 182px; padding-left: 45px; }
.window-buttons button { flex: 1; height: 28px; }

/* Ribbon tabs */
.tabs {
  display: flex;
  align-items: flex-end;
  gap: 1px;
  height: 23px;
  flex: none;
  border-bottom: 1px solid #c4c7cc;
}
.file {
  width: 55px;
  height: 22px;
  margin-right: 2px;
  color: #fff;
  background: linear-gradient(#e0502e, #e0502e 60%, #f07a42);
  border: 1px solid #c9431f;
}
.tab { height: 22px; padding: 2px 8px 0; color: #444; }
.tab.current {
  height: 23px;
  margin-bottom: -1px;
  padding: 1px 7px 0;
  background: #fff;
  border: 1px solid #c4c7cc;
  border-bottom: 0;
  border-radius: 2px 2px 0 0;
}
.tabs .plain { height: 22px; width: 16px; }
.help {
  width: 15px;
  height: 15px;
  margin: 0 2px 4px 4px;
  border-radius: 8px;
  font-weight: 700;
  color: #fff;
  background: #3d76c6;
}

/* Ribbon */
.ribbon {
  display: flex;
  flex: none;
  height: 91px;
  background: linear-gradient(#fff, #fafbfc 60%, #eceef1);
  border-bottom: 2px solid #a0a5ac;
}
.group { display: flex; flex-direction: column; flex: none; border-right: 1px solid #d9dce0; }
.body { display: flex; flex: 1; }
.group h2 { position: relative; height: 18px; line-height: 18px; text-align: center; color: #667; }
.launcher { position: absolute; right: 5px; top: 5px; width: 6px; height: 6px; border: solid #b5b8bd; border-width: 1px 0 0 1px; }
.launcher::after { content: ""; position: absolute; right: 0; bottom: 0; width: 3px; height: 3px; border: solid #a5a8ad; border-width: 0 1px 1px 0; }

.big { flex-direction: column; justify-content: flex-start; padding-top: 3px; line-height: 16px; }
.big svg { margin-bottom: 2px; }
.big .caret { margin-top: 6px; }
.big span .caret { display: inline-block; margin: 0 0 2px 4px; }
.stack { display: flex; flex-direction: column; padding-top: 3px; }
.small { height: 22px; justify-content: flex-start; gap: 2px; }
.small .caret { margin-left: 2px; }
.stack.tight { padding-top: 1px; }
.tight .small { height: 20px; }
button:disabled { color: #a0a0a0; }

.clipboard { width: 100px; }
.clipboard .big { width: 42px; }
.slides { width: 105px; }
.slides .big { width: 50px; }
.font { width: 197px; }
.paragraph { width: 260px; }
.drawing { width: 297px; }
.editing { width: 60px; }
.editing .body { padding-left: 4px; }

.rows { flex-direction: column; }
.row { display: flex; align-items: center; color: #999; }
.row.upper { height: 30px; padding-top: 10px; margin-bottom: 4px; }
.row.lower { height: 32px; }
.glyph { height: 22px; color: #777; }
.serif { font-family: "Liberation Serif", serif; }

.combo { display: flex; align-items: center; height: 23px; border: 1px solid #ececee; background: #fcfcfc; padding-right: 3px; }
.combo select { flex: 1; min-width: 0; padding: 0 1px; border: 0; background: none; appearance: none; }
.family { width: 88px; margin-left: 2px; }
.size { width: 38px; }
.grow { width: 26px; font-size: 16px; font-weight: 700; }
.shrink { width: 14px; font-size: 13px; font-weight: 700; }
.glyph sup { font-size: 10px; line-height: 8px; margin-bottom: 8px; }
.font .upper .divider { margin: 0 5px; }
.font .lower { padding-left: 2px; }
.font .lower .glyph { width: 20px; font-size: 15px; }
.font .lower .bold { width: 21px; font-weight: 700; }
.font .lower .italic { font-style: italic; }
.font .lower .under { width: 21px; text-decoration: underline; }
.font .lower .shade { font-weight: 700; text-shadow: 1px 1px 1px #ccc; }
.font .lower .strike { font-size: 11px; font-weight: 700; text-decoration: line-through; }
.font .lower .spaced { width: 16px; height: 15px; margin: 0 3px 0 4px; font-size: 11px; border-bottom: 1px solid #999; }
.font .lower .case { margin-left: 3px; font-size: 14px; }
.font .lower .divider { margin: 0 2px 0 5px; }

.paragraph .body { gap: 2px; }
.paragraph .rows { width: 139px; padding-left: 3px; }
.paragraph .upper .glyph { width: 19px; }
.paragraph .upper .caret { margin: 0 2px 0 3px; }
.paragraph .upper .caret + .glyph { margin-left: 2px; }
.paragraph .upper .divider, .paragraph .lower .divider { margin: 0 2px; }
.paragraph .lower .glyph { width: 20px; }
.paragraph .lower .caret { margin-left: 1px; }

.gallery { display: flex; height: 58px; margin: 3px 3px 0 4px; border: 1px solid #d5d8dd; background: #fff; }
.gallery-scroll { display: flex; flex-direction: column; width: 14px; border-left: 1px solid #d5d8dd; }
.gallery-scroll button { flex: 1; flex-direction: column; gap: 1px; background: #f6f7f8; }
.gallery-scroll button + button { border-top: 1px solid #d5d8dd; }
.arrange { width: 34px; }
.styles { width: 50px; margin: 0 2px; }

/* Workspace */
.workspace { position: relative; display: flex; flex: 1; min-height: 0; border-bottom: 2px solid #8c9197; }
.pane {
  width: 208px;
  flex: none;
  background: linear-gradient(#c8ccd2, #b8bcbe);
}
.pane-tabs { display: flex; height: 22px; background: linear-gradient(#b3b8c0, #a9afb8); }
.pane-tabs button { width: 50px; border-right: 1px solid #8f96a0; color: #444; }
.pane-tabs .current { width: 51px; background: #c8ccd2; }
.pane-tabs .close { width: 22px; margin-left: auto; border: 0; }
.thumb {
  width: 203px;
  margin: 2px 0 0 2px;
  padding: 3px 3px 2px 2px;
  align-items: flex-start;
  border: 1px solid #f3d98a;
  border-radius: 2px;
  background: linear-gradient(#f9e08c, #fdf3cc 50%, #f7d774);
}
.thumb-no { display: flex; flex-direction: column; align-items: center; width: 12px; margin-right: 4px; }
.thumb-slide { flex: 1; min-width: 0; background: #fff; border: 1px solid #8a8a8a; --yunnan: #d8401c; }

.stage {
  display: flex;
  flex: 1;
  min-width: 0;
  padding-left: 40px;
  background: linear-gradient(#c8ccd2, #b5b9bb);
  border: solid #f1f3f5;
  border-width: 0 0 3px 4px;
}
.slide {
  display: grid;
  grid-template-columns: 213px minmax(0, 1fr);
  align-items: start;
  column-gap: 66px;
  flex: 1;
  min-width: 0;
  padding: 42px 23px 0 59px;
  overflow: hidden;
  background: #fff;
  box-shadow: -2px 0 3px #777, 1px 0 1px #999;
}

.data { width: 100%; margin-top: 30px; table-layout: fixed; border-collapse: collapse; color: #222; }
.data th, .data td { height: 21px; padding: 1px 0 0; border-bottom: 1px solid #fafafa; text-align: center; }
.data th { height: 22px; padding-top: 2px; color: #fff; background: #d0cece; border-right: 1px solid #fff; font-weight: 700; }
.data th:nth-child(1) { width: 72px; }
.data th:nth-child(2) { width: 64px; }
.data td { background: #f3f3f3; }
.data td:nth-child(1) { padding-right: 2px; }
.data td:nth-child(2) { text-align: left; border-right: 1px solid #fff; }
.data tr:nth-child(even) td { background: #e9eff7; }
.masked { display: block; width: 31px; height: 8px; margin-left: auto; background: #e3e4e6; border: solid #c0c2c6; border-width: 1px 0; border-right: 1px solid #7a88a4; }

.map { display: block; width: 100%; }
.land { fill: #d0cece; filter: drop-shadow(1px 3px 1px #aaa); }
.yunnan { fill: var(--yunnan, #d0cece); }
.borders { fill: none; stroke: #fff; stroke-width: 4; stroke-linejoin: round; }
.sales { stroke: #fff; stroke-width: 5; stroke-linejoin: round; filter: drop-shadow(0 2px 1px #a88); }
.red { fill: #f00; }
.green { fill: #66ff33; }
.yellow { fill: #ff0; }
.xinjiang { fill: url(#glow); }
.labels { font-size: 36px; fill: #1f3864; text-anchor: middle; dominant-baseline: central; }

.scrollbar { display: flex; flex-direction: column; width: 17px; margin-left: 40px; padding-bottom: 17px; background: #dfe2e6; border-left: 1px solid #b5b9be; }
.scrollbar button { height: 16px; }
.track { flex: 1; padding: 18px 0; }
.handle { height: 100%; border: 1px solid #9ba3ad; border-radius: 2px; background: linear-gradient(90deg, #fff, #e6e9ed); }
.arrow { width: 0; border: 5px solid transparent; border-top-color: #555; border-bottom: 0; }
.arrow.up { border-top: 0; border-bottom: 5px solid #555; }

.watermark {
  position: absolute;
  right: 20px;
  bottom: -5px;
  font-size: 18px;
  line-height: 24px;
  color: #e2e3e4;
  text-shadow: 1px 1px 0 #a0a0a0, -1px 0 0 #aaa;
}

/* Status bar */
.status {
  display: flex;
  align-items: center;
  flex: none;
  height: 20px;
  background: linear-gradient(#eceef0, #c6cad0);
  color: #444;
}
.cell { display: flex; align-items: center; gap: 11px; height: 18px; border-right: 1px solid #a9adb3; }
.pages { width: 137px; padding-left: 5px; }
.theme { width: 94px; padding-left: 11px; }
.lang { width: 93px; padding-left: 5px; }
.view { width: 18px; height: 18px; }
.view.on { background: #fbd768; border: 1px solid #d9a93a; }
.percent { width: 36px; text-align: center; }
.round { width: 15px; height: 15px; border: 1px solid #777; border-radius: 8px; background: #f5f5f5; }
.zoom { width: 97px; height: 16px; margin: 0; appearance: none; background: linear-gradient(#999, #999) center / 100% 1px no-repeat; }
.zoom::-webkit-slider-thumb { appearance: none; width: 9px; height: 12px; border: 1px solid #666; border-radius: 1px 1px 4px 4px; background: #f4f4f4; }
.fit { margin: 0 3px 0 5px; }
```
